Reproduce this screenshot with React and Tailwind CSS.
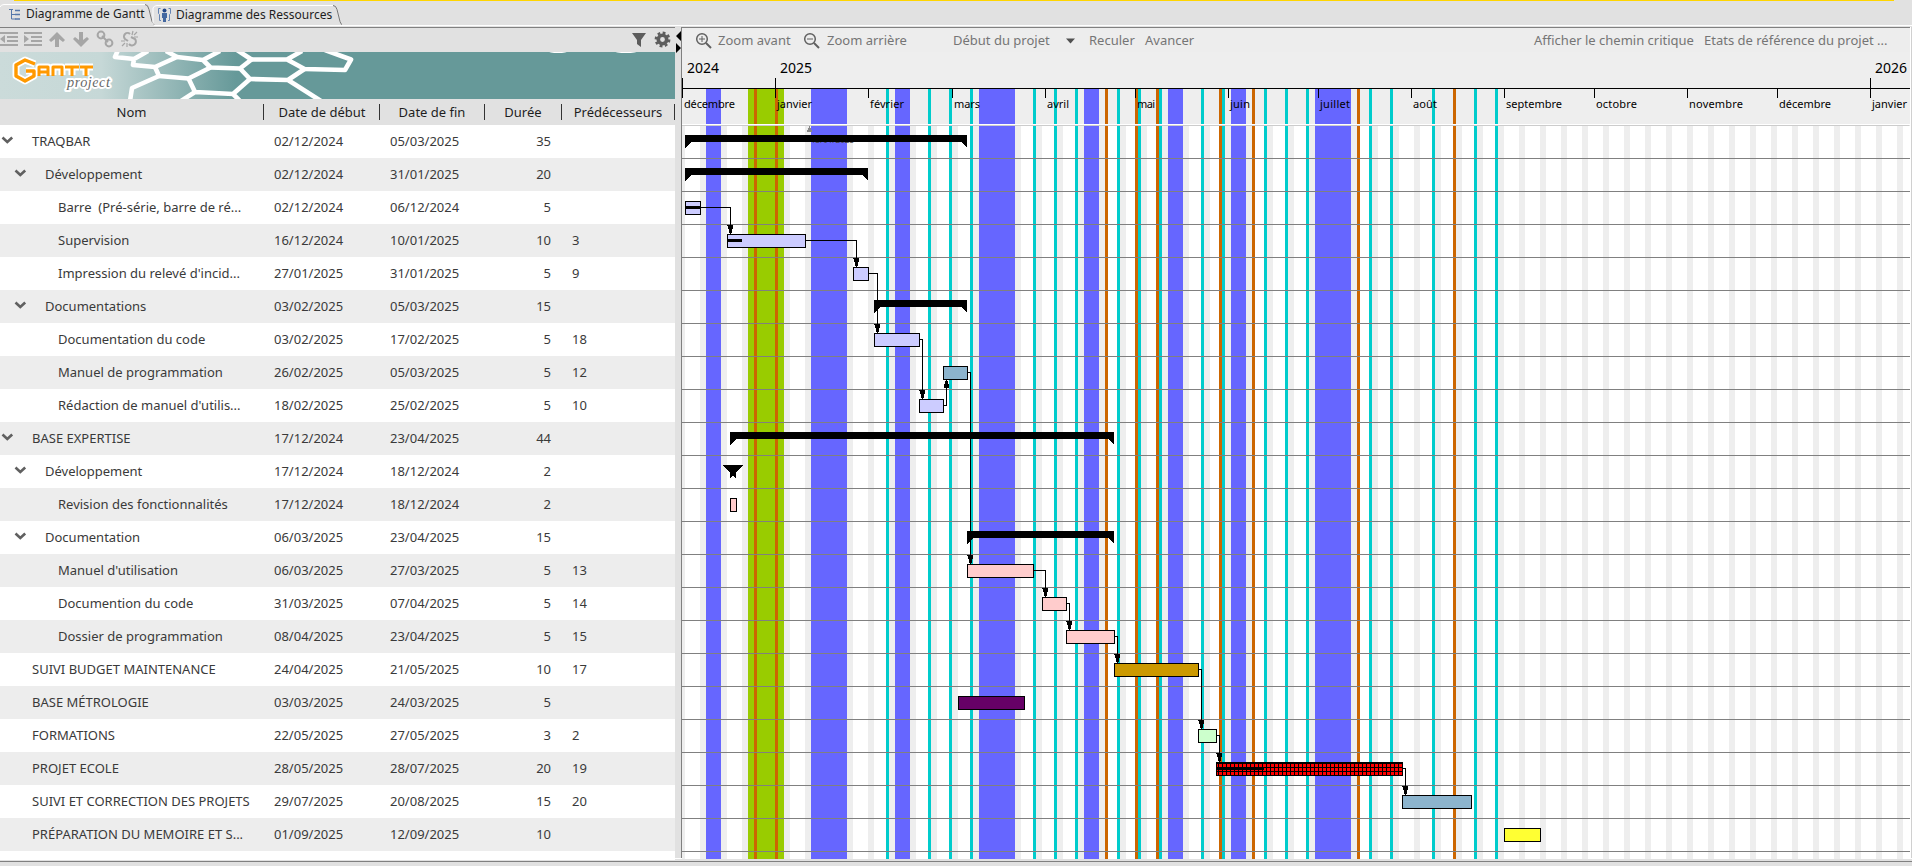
const F = "font-['Noto_Sans',sans-serif]";

const ROWS = [
  [0, true, 'TRAQBAR', '02/12/2024', '05/03/2025', '35', ''],
  [1, true, 'Développement', '02/12/2024', '31/01/2025', '20', ''],
  [2, false, 'Barre  (Pré-série, barre de ré...', '02/12/2024', '06/12/2024', '5', ''],
  [2, false, 'Supervision', '16/12/2024', '10/01/2025', '10', '3'],
  [2, false, "Impression du relevé d'incid...", '27/01/2025', '31/01/2025', '5', '9'],
  [1, true, 'Documentations', '03/02/2025', '05/03/2025', '15', ''],
  [2, false, 'Documentation du code', '03/02/2025', '17/02/2025', '5', '18'],
  [2, false, 'Manuel de programmation', '26/02/2025', '05/03/2025', '5', '12'],
  [2, false, "Rédaction de manuel d'utilis...", '18/02/2025', '25/02/2025', '5', '10'],
  [0, true, 'BASE EXPERTISE', '17/12/2024', '23/04/2025', '44', ''],
  [1, true, 'Développement', '17/12/2024', '18/12/2024', '2', ''],
  [2, false, 'Revision des fonctionnalités', '17/12/2024', '18/12/2024', '2', ''],
  [1, true, 'Documentation', '06/03/2025', '23/04/2025', '15', ''],
  [2, false, "Manuel d'utilisation", '06/03/2025', '27/03/2025', '5', '13'],
  [2, false, 'Documention du code', '31/03/2025', '07/04/2025', '5', '14'],
  [2, false, 'Dossier de programmation', '08/04/2025', '23/04/2025', '5', '15'],
  [0, false, 'SUIVI BUDGET MAINTENANCE', '24/04/2025', '21/05/2025', '10', '17'],
  [0, false, 'BASE MÉTROLOGIE', '03/03/2025', '24/03/2025', '5', ''],
  [0, false, 'FORMATIONS', '22/05/2025', '27/05/2025', '3', '2'],
  [0, false, 'PROJET ECOLE', '28/05/2025', '28/07/2025', '20', '19'],
  [0, false, 'SUIVI ET CORRECTION DES PROJETS', '29/07/2025', '20/08/2025', '15', '20'],
  [0, false, 'PRÉPARATION DU MEMOIRE ET S...', '01/09/2025', '12/09/2025', '10', ''],
];

const NAME_PAD = ['pl-8', 'pl-[45px]', 'pl-[58px]'];
const CHEVRON_PAD = ['pl-[1px]', 'pl-[14px]'];

function Table() {
  return (
    <div className="w-[675px] bg-white text-[13px] text-[#3a3a3a]">
      <div className="flex h-[26px] items-center bg-[#e1e1e1] text-center leading-4 text-[#1e1e1e]">
        <div className="w-[264px] border-r border-[#333]">Nom</div>
        <div className="w-[116px] border-r border-[#333] pl-px">Date de début</div>
        <div className="w-[105px] border-r border-[#333]">Date de fin</div>
        <div className="w-[77px] border-r border-[#333]">Durée</div>
        <div className="w-[113px] border-r border-[#333]">Prédécesseurs</div>
      </div>
      {ROWS.map(([level, open, name, start, end, duration, pred], i) => (
        <div key={i} className={`flex h-[33px] items-center ${i % 2 ? 'bg-[#ededed]' : 'bg-white'}`}>
          <div className="relative w-[274px]">
            {open && (
              <div className={`absolute inset-y-0 left-0 flex items-center ${CHEVRON_PAD[level]}`}>
                <svg width="13" height="9" viewBox="0 0 13 9" className="-mt-[3px]">
                  <path d="M1.5 1.5 L6.3 6 L11.2 1.5" fill="none" stroke="#606060" strokeWidth="2.6" />
                </svg>
              </div>
            )}
            <div className={`whitespace-pre ${NAME_PAD[level]}`}>{name}</div>
          </div>
          <div className="w-[116px]">{start}</div>
          <div className="w-[100px]">{end}</div>
          <div className="w-[61px] text-right">{duration}</div>
          <div className="pl-[21px]">{pred}</div>
        </div>
      ))}
      <div className="h-[9px] bg-white" />
    </div>
  );
}

/* Timeline coordinates: one day is 3px wide, day 0 is 1 December 2024. */
const BLUE = [[706, 15], [811, 36], [895, 15], [979, 36], [1084, 15], [1168, 15], [1231, 15], [1315, 36]];
const ORANGE = [754, 775, 1105, 1135, 1156, 1219, 1252, 1357, 1453];
const TEAL = [886, 928, 949, 970, 1033, 1054, 1075, 1117, 1138, 1159, 1201, 1222, 1264, 1285, 1306, 1369, 1390, 1432, 1474, 1495];
const MONTHS = [
  [682, 'décembre', 51], [775, 'janvier', 35], [868, 'février', 34], [952, 'mars', 26], [1045, 'avril', 22],
  [1135, 'mai', 18], [1228, 'juin', 20], [1318, 'juillet', 30], [1411, 'août', 24], [1504, 'septembre', 56],
  [1594, 'octobre', 41], [1687, 'novembre', 54], [1777, 'décembre', 52], [1870, 'janvier', 35],
];
const YEARS = [[682, 687, '2024'], [775, 780, '2025'], [1870, 1875, '2026']];
const SUMMARIES = [[0, 685, 967], [1, 685, 868], [5, 874, 967], [9, 730, 1114], [12, 967, 1114]];
const BARS = [
  [2, 685, 701, '#ccccff', 16], [3, 727, 806, '#ccccff', 15], [4, 853, 869, '#ccccff'],
  [6, 874, 920, '#ccccff'], [7, 943, 968, '#8cb4cd'], [8, 919, 944, '#ccccff'],
  [11, 730, 737, '#ffcccc'], [13, 967, 1034, '#ffcccc'], [14, 1042, 1067, '#ffcccc'],
  [15, 1066, 1115, '#ffcccc'], [16, 1114, 1199, '#cc9900'], [17, 958, 1025, '#660066'],
  [18, 1198, 1217, '#ccffcc'], [19, 1216, 1403, 'url(#hatch)', 48], [20, 1402, 1472, '#8cb4cd'],
  [21, 1504, 1541, '#ffff33'],
];
/* [from row, from x, to row, to x] */
const LINKS = [
  [2, 701, 3, 730], [3, 806, 4, 856], [4, 869, 6, 877], [6, 920, 8, 922], [7, 968, 13, 970],
  [13, 1034, 14, 1045], [14, 1067, 15, 1069], [15, 1115, 16, 1117], [16, 1199, 18, 1201],
  [18, 1217, 19, 1219], [19, 1403, 20, 1405],
];
const rowTop = (r) => 125 + r * 33;
const weekends = Array.from({ length: 59 }, (_, i) => 679 + i * 21);

function Bands({ y, h }) {
  return (
    <g>
      <rect x="748" y={y} width="36" height={h} fill="#99cc00" />
      {BLUE.map(([x, w]) => <rect key={x} x={x} y={y} width={w} height={h} fill="#6666ff" />)}
      {ORANGE.map((x) => <rect key={x} x={x} y={y} width="3" height={h} fill="#cc6600" />)}
      {TEAL.map((x) => <rect key={x} x={x} y={y} width="3" height={h} fill="#00cccc" />)}
    </g>
  );
}

function Chart() {
  return (
    <svg width="1228" height="807" viewBox="682 52 1228 807" shapeRendering="crispEdges" className="block">
      <defs>
        <pattern id="hatch" patternUnits="userSpaceOnUse" x="1218" y="763" width="4" height="4">
          <rect width="4" height="4" fill="#ff0000" />
          <rect width="1" height="4" fill="#000" />
          <rect width="4" height="1" fill="#000" />
        </pattern>
      </defs>
      <rect x="682" y="52" width="1228" height="73" fill="#eeeeee" />
      <rect x="682" y="126" width="1228" height="733" fill="#fff" />
      {weekends.map((x) => <rect key={x} x={x} y="126" width="6" height="733" fill="#eeeeee" />)}
      <Bands y={89} h={35} />
      <Bands y={126} h={733} />
      <rect x="682" y="124" width="1228" height="1" fill="#fff" />
      <rect x="682" y="125" width="1227" height="1" fill="#cccccc" />
      <rect x="682" y="88" width="1228" height="1" fill="#000" />
      {YEARS.map(([x, tx, t]) => (
        <g key={t}>
          <rect x={x} y="78" width="1" height="20" />
          <text x={tx} y="73" fontSize="14" textLength="32">{t}</text>
        </g>
      ))}
      {MONTHS.map(([x, t, w]) => (
        <g key={x}>
          <rect x={x} y="88" width="1" height="10" />
          <text x={x + 2} y="108" fontSize="11" textLength={w}>{t}</text>
        </g>
      ))}
      {ROWS.map((_, r) => <rect key={r} x="682" y={rowTop(r) + 33} width="1228" height="1" fill="#808080" />)}
      <path d="M809 126 h1 v2 h1 v2 h1 v2 h-5 v-2 h1 v-2 h1 z" fill="#888" />
      <text x="811" y="143" fontSize="8" textLength="43" fill="#444">13/01/2025</text>
      {LINKS.map(([a, x1, b, x2], i) => {
        const y1 = rowTop(a) + 16;
        const y2 = rowTop(b) + 10;
        return (
          <g key={i}>
            <rect x={x1} y={y1} width={x2 - x1 + 1} height="1" />
            <rect x={x2} y={y1} width="1" height={y2 - y1} />
            <path d={`M${x2 - 3} ${y2 - 9} h6 v4 h-1 v4 h-3 v-4 h-1 v-3 h-1 z`} />
          </g>
        );
      })}
      <path d="M944 405 h2 v-25 h1 v26 h-3 z M944 388 v-4 h1 v-3 h3 v3 h1 v4 z" />
      {SUMMARIES.map(([r, x1, x2]) => {
        const y = rowTop(r) + 10;
        return <path key={r} d={`M${x1} ${y} H${x2} V${y + 13} L${x2 - 6} ${y + 7} H${x1 + 6} L${x1} ${y + 13} Z`} />;
      })}
      <path d="M723 465 h20 l-7 8 v5 l-3 -2 l-3 2 v-5 z" />
      {BARS.map(([r, x1, x2, fill, done]) => {
        const y = rowTop(r) + 10;
        return (
          <g key={r}>
            <rect x={x1} y={y} width={x2 - x1} height="14" />
            <rect x={x1 + 1} y={y + 1} width={x2 - x1 - 2} height="12" fill={fill} />
            {done && <rect x={x1} y={y + 5} width={done} height="3" />}
          </g>
        );
      })}
    </svg>
  );
}

function Logo() {
  return (
    <svg width="675" height="47" viewBox="0 52 675 47" className="block">
      <defs>
        <linearGradient id="teal" x1="0" x2="675" y1="0" y2="0" gradientUnits="userSpaceOnUse">
          <stop offset="0" stopColor="#cbdbda" />
          <stop offset="0.15" stopColor="#c6d8d7" />
          <stop offset="0.35" stopColor="#669999" />
        </linearGradient>
      </defs>
      <rect y="52" width="675" height="47" fill="url(#teal)" />
      <g fill="none" stroke="#fff" strokeWidth="4.6" strokeLinejoin="round">
        <path d="M118 50 L115 57 L134 59 L148 51 M134 59 L133 65 L155 67 L177 57 L166 51" />
        <path d="M177 57 L203 60 L220 51 M203 60 L210.500 67.500 L240 68.500 L251.500 59.500 L237 50" />
        <path d="M251.500 59.500 L287 59.500 L302 51 M287 59.500 L304.500 69 L345 70 L351 59.500 L325 50" />
        <path d="M155 67 L159 76 L188.500 78.500 L210.500 67.500 M240 68.500 L250 79 L288 80 L304.500 69 M288 80 L321 101" />
        <path d="M188.500 78.500 L195 92 L233 94 L250 79 M159 76 L132 88 L130 101 M195 92 L181 101 M233 94 L240 101" />
      </g>
      <ellipse cx="558" cy="51" rx="10" ry="2" fill="#fff" />
      <ellipse cx="626" cy="51" rx="12" ry="2" fill="#fff" />
      <g strokeLinejoin="round">
        <g fill="none" stroke="#fff" strokeWidth="7">
          <path d="M35 64 L25 60 L16 65 V76 L25 81 L34 76 V71 H26" />
          <path d="M39 75 V71 H48 V75 M39 71 V67 H48 V75 M53 75 V67 H62 V75 M65 67 H79 M72 67 V75 M80 67 H93 M86 67 V75" />
        </g>
        <path d="M35 64 L25 60 L16 65 V76 L25 81 L34 76 V71 H26" fill="none" stroke="#ff9900" strokeWidth="3.4" />
        <path d="M39 76 V67 H48 V76 M39 72 H48 M53 76 V67 H62 V76 M65 67 H79 M72 67 V76 M80 67 H93 M86 67 V76" fill="none" stroke="#ff9900" strokeWidth="3" />
      </g>
      <text x="67" y="87" fontSize="14.5" textLength="43" fontStyle="italic" fill="#666" stroke="#fff" strokeWidth="4" strokeLinejoin="round" paintOrder="stroke" className="font-['Liberation_Serif',serif]">project</text>
    </svg>
  );
}

function EditIcons() {
  return (
    <svg width="142" height="24" viewBox="0 28 142 24" className="block" fill="#a6a6a6">
      <path d="M0 32h18v2H0z M7 36h11v2H7z M7 40h11v2H7z M0 44h18v2H0z M0 39l5-4v8z" />
      <path d="M24 32h18v2H24z M31 36h11v2H31z M31 40h11v2H31z M24 44h18v2H24z M29 39l-5-4v8z" />
      <path d="M57 32l8 8-2 2-4-3v8h-4v-8l-4 3-2-2z" />
      <path d="M81 47l8-8-2-2-4 3v-8h-4v8l-4-3-2 2z" />
      <g fill="none" stroke="#a6a6a6" strokeWidth="2">
        <circle cx="101" cy="35" r="3.400" />
        <circle cx="109" cy="43" r="3.400" />
        <path d="M102 36l6 6" />
        <path d="M130 34a3.500 3.500 0 1 0-5 5l3 2 M129 44a3.500 3.500 0 1 0 6-5l-4-2" />
        <path d="M132 35l1-4M134 35l3-3M134 37h4M121 41h4M125 43l-3 3M127 43v4" strokeWidth="1.200" />
      </g>
    </svg>
  );
}

export default function App() {
  return (
    <div className={`flex h-[866px] w-[1912px] flex-col overflow-hidden bg-[#e1e1e1] ${F}`}>
      <div className="flex h-px"><div className="ml-[14px] w-[1880px] bg-[#ffd500]" /></div>
      <div className="flex h-[26px] text-[12px] text-[#1e1e1e]">
        <svg width="26" height="26" viewBox="0 1 26 26" className="block shrink-0">
          <path d="M0 7 Q1 4.500 4 4.500 H26" fill="none" stroke="#fff" />
          <path d="M9 9.500h4 M11.500 10v9h4 M11.500 14.500h4" fill="none" stroke="#5577aa" />
          <path d="M15 10.500h5M15 14.500h5M15 19h5" stroke="#5577aa" strokeWidth="1.500" />
        </svg>
        <div className="mt-[3px] w-[119px] shrink-0 whitespace-nowrap border-t border-white leading-[18px]">Diagramme de Gantt</div>
        <svg width="31" height="26" viewBox="145 1 31 26" className="block shrink-0">
          <path d="M145 4.500 q3 0 4 5 l3 12 q1 2 2 3" fill="none" stroke="#777" />
          <path d="M153 24 V8 q1-2.500 4-2.500 H176 M154 25.500 H176" fill="none" stroke="#fff" />
          <circle cx="164.500" cy="10.500" r="2" fill="#24488a" />
          <path d="M162 13h5v5h-1v4h-3v-4h-1z" fill="#4468a0" />
          <path d="M160.500 8.500h-2v5l1 1v6h1.500 M168.500 8.500h2v5l-1 1v6h-1.500" fill="none" stroke="#6685b5" />
        </svg>
        <div className="flex h-[25px] flex-1 border-b border-white">
          <div className="mt-1 w-[157px] whitespace-nowrap border-t border-white leading-[18px]">Diagramme des Ressources</div>
          <svg width="12" height="24" viewBox="333 1 12 24" className="block">
            <path d="M333 5.500 q3 0 4 4 l3 12 q1 3 2 3" fill="none" stroke="#777" />
          </svg>
        </div>
      </div>
      <div className="flex h-[832px] border-b border-white">
        <div className="w-[675px] border-t border-[#808080]">
          <div className="flex h-6 items-center justify-between bg-[#e1e1e1]">
            <EditIcons />
            <svg width="45" height="24" viewBox="630 28 45 24" className="block" fill="#5c5c5c">
              <path d="M632 33h14l-5 7v7l-4-3v-4z" />
              <circle cx="662.500" cy="39.500" r="4.200" fill="none" stroke="#5c5c5c" strokeWidth="3.600" />
              <circle cx="662.500" cy="39.500" r="6.700" fill="none" stroke="#5c5c5c" strokeWidth="2.400" strokeDasharray="2.800 2.460" />
            </svg>
          </div>
          <Logo />
          <Table />
        </div>
        <div className="w-[6px] bg-[#e1e1e1] pt-1">
          <svg width="6" height="22" viewBox="0 0 6 22"><path d="M6 0v10l-5-5z M1 12v10l5-5z" /></svg>
        </div>
        <div className="w-[1229px] border-l border-t border-[#808080]">
          <div className="flex h-6 items-center bg-[#ededed] pt-[2px] text-[13px] text-[#757575]">
            <svg width="36" height="24" viewBox="682 28 36 24" className="block" fill="none" stroke="#606060">
              <circle cx="702" cy="38" r="5.300" strokeWidth="1.500" /><path d="M706 42l5 5" strokeWidth="2" /><path d="M699 38h6M702 35v6" />
            </svg>
            <div className="w-[85px] whitespace-nowrap">Zoom avant</div>
            <svg width="24" height="24" viewBox="803 28 24 24" className="block" fill="none" stroke="#606060">
              <circle cx="810" cy="38" r="5.300" strokeWidth="1.500" /><path d="M814 42l5 5" strokeWidth="2" /><path d="M807 38h6" />
            </svg>
            <div className="w-[126px] whitespace-nowrap">Zoom arrière</div>
            <div className="w-[113px] whitespace-nowrap">Début du projet</div>
            <svg width="23" height="24" viewBox="1066 28 23 24" className="block"><path d="M1066 37.500h9l-4.500 5z" fill="#505050" /></svg>
            <div className="w-[56px]">Reculer</div>
            <div className="w-[389px]">Avancer</div>
            <div className="w-[170px] whitespace-nowrap">Afficher le chemin critique</div>
            <div className="whitespace-nowrap">Etats de référence du projet ...</div>
          </div>
          <Chart />
        </div>
        <div className="w-[2px] border-r border-[#d0d0d0] bg-white" />
      </div>
      <div className="mt-[2px] h-px bg-[#808080]" />
    </div>
  );
}
